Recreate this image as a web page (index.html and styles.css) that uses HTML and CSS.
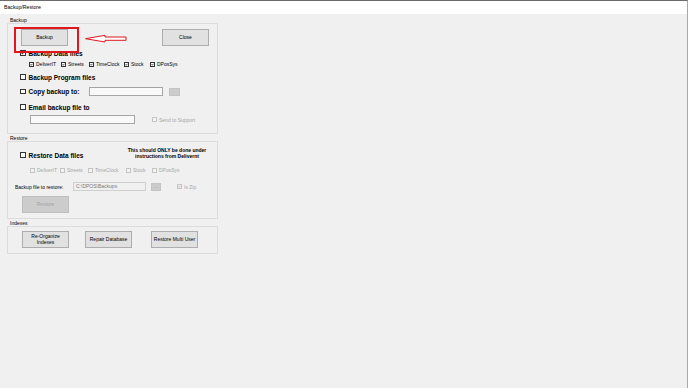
FILE: index.html
```html
<!DOCTYPE html>
<html>
  <head>
    <title>Backup/Restore</title>
    <link rel="stylesheet" href="styles.css">
  </head>
  <body>
    <div class="window">
      <div class="titlebar">Backup/Restore</div>

      <div class="content">
        <!-- Backup -->
        <section class="group">
          <div class="group-label">Backup</div>
          <div class="group-box backup-box">
            <div class="button-row">
              <button class="btn">Backup</button>
              <button class="btn">Close</button>
            </div>

            <div class="check big data-files">
              <span class="box"><svg viewBox="0 0 10 10"><polyline points="1.5,5 4,7.6 8.5,2.4" /></svg></span>
              Backup Data files
            </div>

            <div class="sub-row backup-subs">
              <div class="check"><span class="box"><svg viewBox="0 0 10 10"><polyline points="1.5,5 4,7.6 8.5,2.4" /></svg></span>DeliverIT</div>
              <div class="check"><span class="box"><svg viewBox="0 0 10 10"><polyline points="1.5,5 4,7.6 8.5,2.4" /></svg></span>Streets</div>
              <div class="check"><span class="box"><svg viewBox="0 0 10 10"><polyline points="1.5,5 4,7.6 8.5,2.4" /></svg></span>TimeClock</div>
              <div class="check"><span class="box"><svg viewBox="0 0 10 10"><polyline points="1.5,5 4,7.6 8.5,2.4" /></svg></span>Stock</div>
              <div class="check"><span class="box"><svg viewBox="0 0 10 10"><polyline points="1.5,5 4,7.6 8.5,2.4" /></svg></span>DPosSys</div>
            </div>

            <div class="check big program-files"><span class="box"></span>Backup Program files</div>

            <div class="field-row copy-row">
              <div class="check big copy-label"><span class="box"></span>Copy backup to:</div>
              <span class="textbox copy-path"></span>
              <span class="mini-btn"></span>
            </div>

            <div class="check big email-label"><span class="box"></span>Email backup file to</div>

            <div class="field-row email-row">
              <span class="textbox email-path"></span>
              <div class="check disabled support"><span class="box"></span>Send to Support</div>
            </div>
          </div>
        </section>

        <!-- Restore -->
        <section class="group">
          <div class="group-label">Restore</div>
          <div class="group-box restore-box">
            <div class="restore-top">
              <div class="check big"><span class="box"></span>Restore Data files</div>
              <div class="warning">This should ONLY be done under<br>instructions from Delivernt</div>
            </div>

            <div class="sub-row restore-subs">
              <div class="check disabled"><span class="box"></span>DeliverIT</div>
              <div class="check disabled"><span class="box"></span>Streets</div>
              <div class="check disabled"><span class="box"></span>TimeClock</div>
              <div class="check disabled"><span class="box"></span>Stock</div>
              <div class="check disabled"><span class="box"></span>DPosSys</div>
            </div>

            <div class="field-row file-row">
              <span class="file-label">Backup file to restore:</span>
              <span class="textbox restore-path">C:\DPOS\Backups</span>
              <span class="mini-btn dots">...</span>
              <div class="check disabled zip"><span class="box"><svg viewBox="0 0 10 10"><polyline points="1.5,5 4,7.6 8.5,2.4" /></svg></span>Is Zip</div>
            </div>

            <button class="btn restore-btn" disabled>Restore</button>
          </div>
        </section>

        <!-- Indexes -->
        <section class="group">
          <div class="group-label">Indexes</div>
          <div class="group-box index-box">
            <div class="index-row">
              <button class="btn">Re-Organize<br>Indexes</button>
              <button class="btn">Repair Database</button>
              <button class="btn">Restore Multi User</button>
            </div>
          </div>
        </section>
      </div>

      <div class="highlight"></div>
      <svg class="arrow" viewBox="0 0 45 11" width="45" height="11">
        <polygon points="1.5,5.7 21,2.3 21,4 42,4 42,7.3 21,7.3 21,9" />
      </svg>
    </div>
  </body>
</html>
```

FILE: styles.css
```css
body {
  margin: 0;
  font-family: "Liberation Sans", Arial, sans-serif;
  font-size: 5px;
  color: #000;
  background: #f0f0f0;
}
.window {
  position: relative;
  width: 688px;
  height: 388px;
  box-sizing: border-box;
  background: #f0f0f0;
  border-top: 1px solid #6b6b6b;
  border-right: 1px solid #a8a8a8;
}
.titlebar {
  height: 13px;
  line-height: 13px;
  padding-left: 4px;
  background: #fff;
  font-size: 5.2px;
}
.content {
  padding: 3px 0 0 7px;
}
.group {
  width: 211px;
}
.group + .group {
  margin-top: 1px;
}
.group-label {
  height: 6px;
  line-height: 7.5px;
  padding-left: 3px;
}
.group-box {
  box-sizing: border-box;
  border: 1px solid #dcdcdc;
}
.backup-box {
  height: 111px;
}
.restore-box {
  height: 78px;
}
.index-box {
  height: 28px;
}

/* buttons */
.btn {
  width: 47px;
  height: 17px;
  padding: 0;
  background: #e1e1e1;
  border: 1px solid #adadad;
  font-family: inherit;
  font-size: 5px;
  line-height: 5.5px;
  color: #000;
}
.btn:disabled {
  background: #cccccc;
  border-color: #bfbfbf;
  color: #a3a3a3;
}
.button-row {
  display: flex;
  justify-content: space-between;
  padding: 5px 8px 0 13px;
}

/* checkboxes */
.check {
  display: flex;
  align-items: center;
  gap: 2px;
  white-space: nowrap;
}
.box {
  display: inline-block;
  width: 5px;
  height: 5px;
  box-sizing: border-box;
  border: 1px solid #333;
  background: #fff;
  flex: none;
}
.box svg {
  display: block;
  width: 100%;
  height: 100%;
  overflow: visible;
}
.box polyline {
  fill: none;
  stroke: #333;
  stroke-width: 3;
}
.check.big {
  height: 8px;
  gap: 3px;
  font-size: 6.5px;
  font-weight: bold;
}
.check.big .box {
  width: 5.5px;
  height: 5.5px;
}
.check.disabled {
  color: #a6a6a6;
}
.check.disabled .box {
  border-color: #c4c4c4;
  background: #f4f4f4;
}
.check.disabled polyline {
  stroke: #b0b0b0;
}

.data-files {
  margin-top: 3px;
  padding-left: 12px;
}
.sub-row {
  display: grid;
  height: 6px;
  align-items: center;
}
.backup-subs {
  margin-top: 4px;
  padding-left: 21px;
  grid-template-columns: 32px 28px 35px 26px auto;
}
.program-files {
  margin-top: 6px;
  padding-left: 12px;
}

/* text fields */
.field-row {
  display: flex;
  align-items: center;
  height: 9px;
}
.textbox {
  display: inline-block;
  box-sizing: border-box;
  height: 9px;
  border: 1px solid #a5a5a5;
  background: #f9f9f9;
}
.mini-btn {
  display: inline-block;
  box-sizing: border-box;
  height: 8px;
  background: #cccccc;
  border: 1px solid #c4c4c4;
}
.copy-row {
  margin-top: 6px;
  padding-left: 12px;
}
.copy-label {
  width: 69px;
}
.copy-path {
  width: 74px;
}
.copy-row .mini-btn {
  width: 11px;
  margin-left: 6px;
}
.email-label {
  margin-top: 7px;
  padding-left: 12px;
}
.email-row {
  margin-top: 4px;
  padding-left: 22px;
}
.email-path {
  width: 105px;
}
.support {
  margin-left: 17px;
}

/* restore */
.restore-top {
  display: flex;
  justify-content: space-between;
  align-items: flex-end;
  margin-top: 6px;
  padding: 0 8px 0 12px;
}
.warning {
  width: 84px;
  text-align: center;
  font-weight: bold;
  line-height: 5.5px;
}
.restore-subs {
  margin-top: 8px;
  padding-left: 22px;
  grid-template-columns: 30px 28px 38px 26px auto;
}
.file-row {
  margin-top: 9px;
  padding-left: 7px;
}
.file-label {
  width: 58px;
}
.restore-path {
  width: 73px;
  padding-left: 2px;
  line-height: 7px;
  color: #7a7a7a;
  border-color: #cfcfcf;
  background: #f0f0f0;
}
.dots {
  width: 10px;
  margin-left: 5px;
  color: #a0a0a0;
  text-align: center;
  line-height: 5px;
}
.zip {
  margin-left: 16px;
}
.restore-btn {
  display: block;
  margin: 5px 0 0 14px;
}

/* indexes */
.index-row {
  display: grid;
  grid-template-columns: 63px 66px 47px;
  margin-top: 4px;
  padding-left: 14px;
}

/* annotation */
.highlight {
  position: absolute;
  left: 14px;
  top: 26px;
  width: 65px;
  height: 26px;
  box-sizing: border-box;
  border: 2px solid #e3161e;
}
.arrow {
  position: absolute;
  left: 84px;
  top: 32px;
}
.arrow polygon {
  fill: #fff;
  stroke: #e3161e;
  stroke-width: 1;
}
```
